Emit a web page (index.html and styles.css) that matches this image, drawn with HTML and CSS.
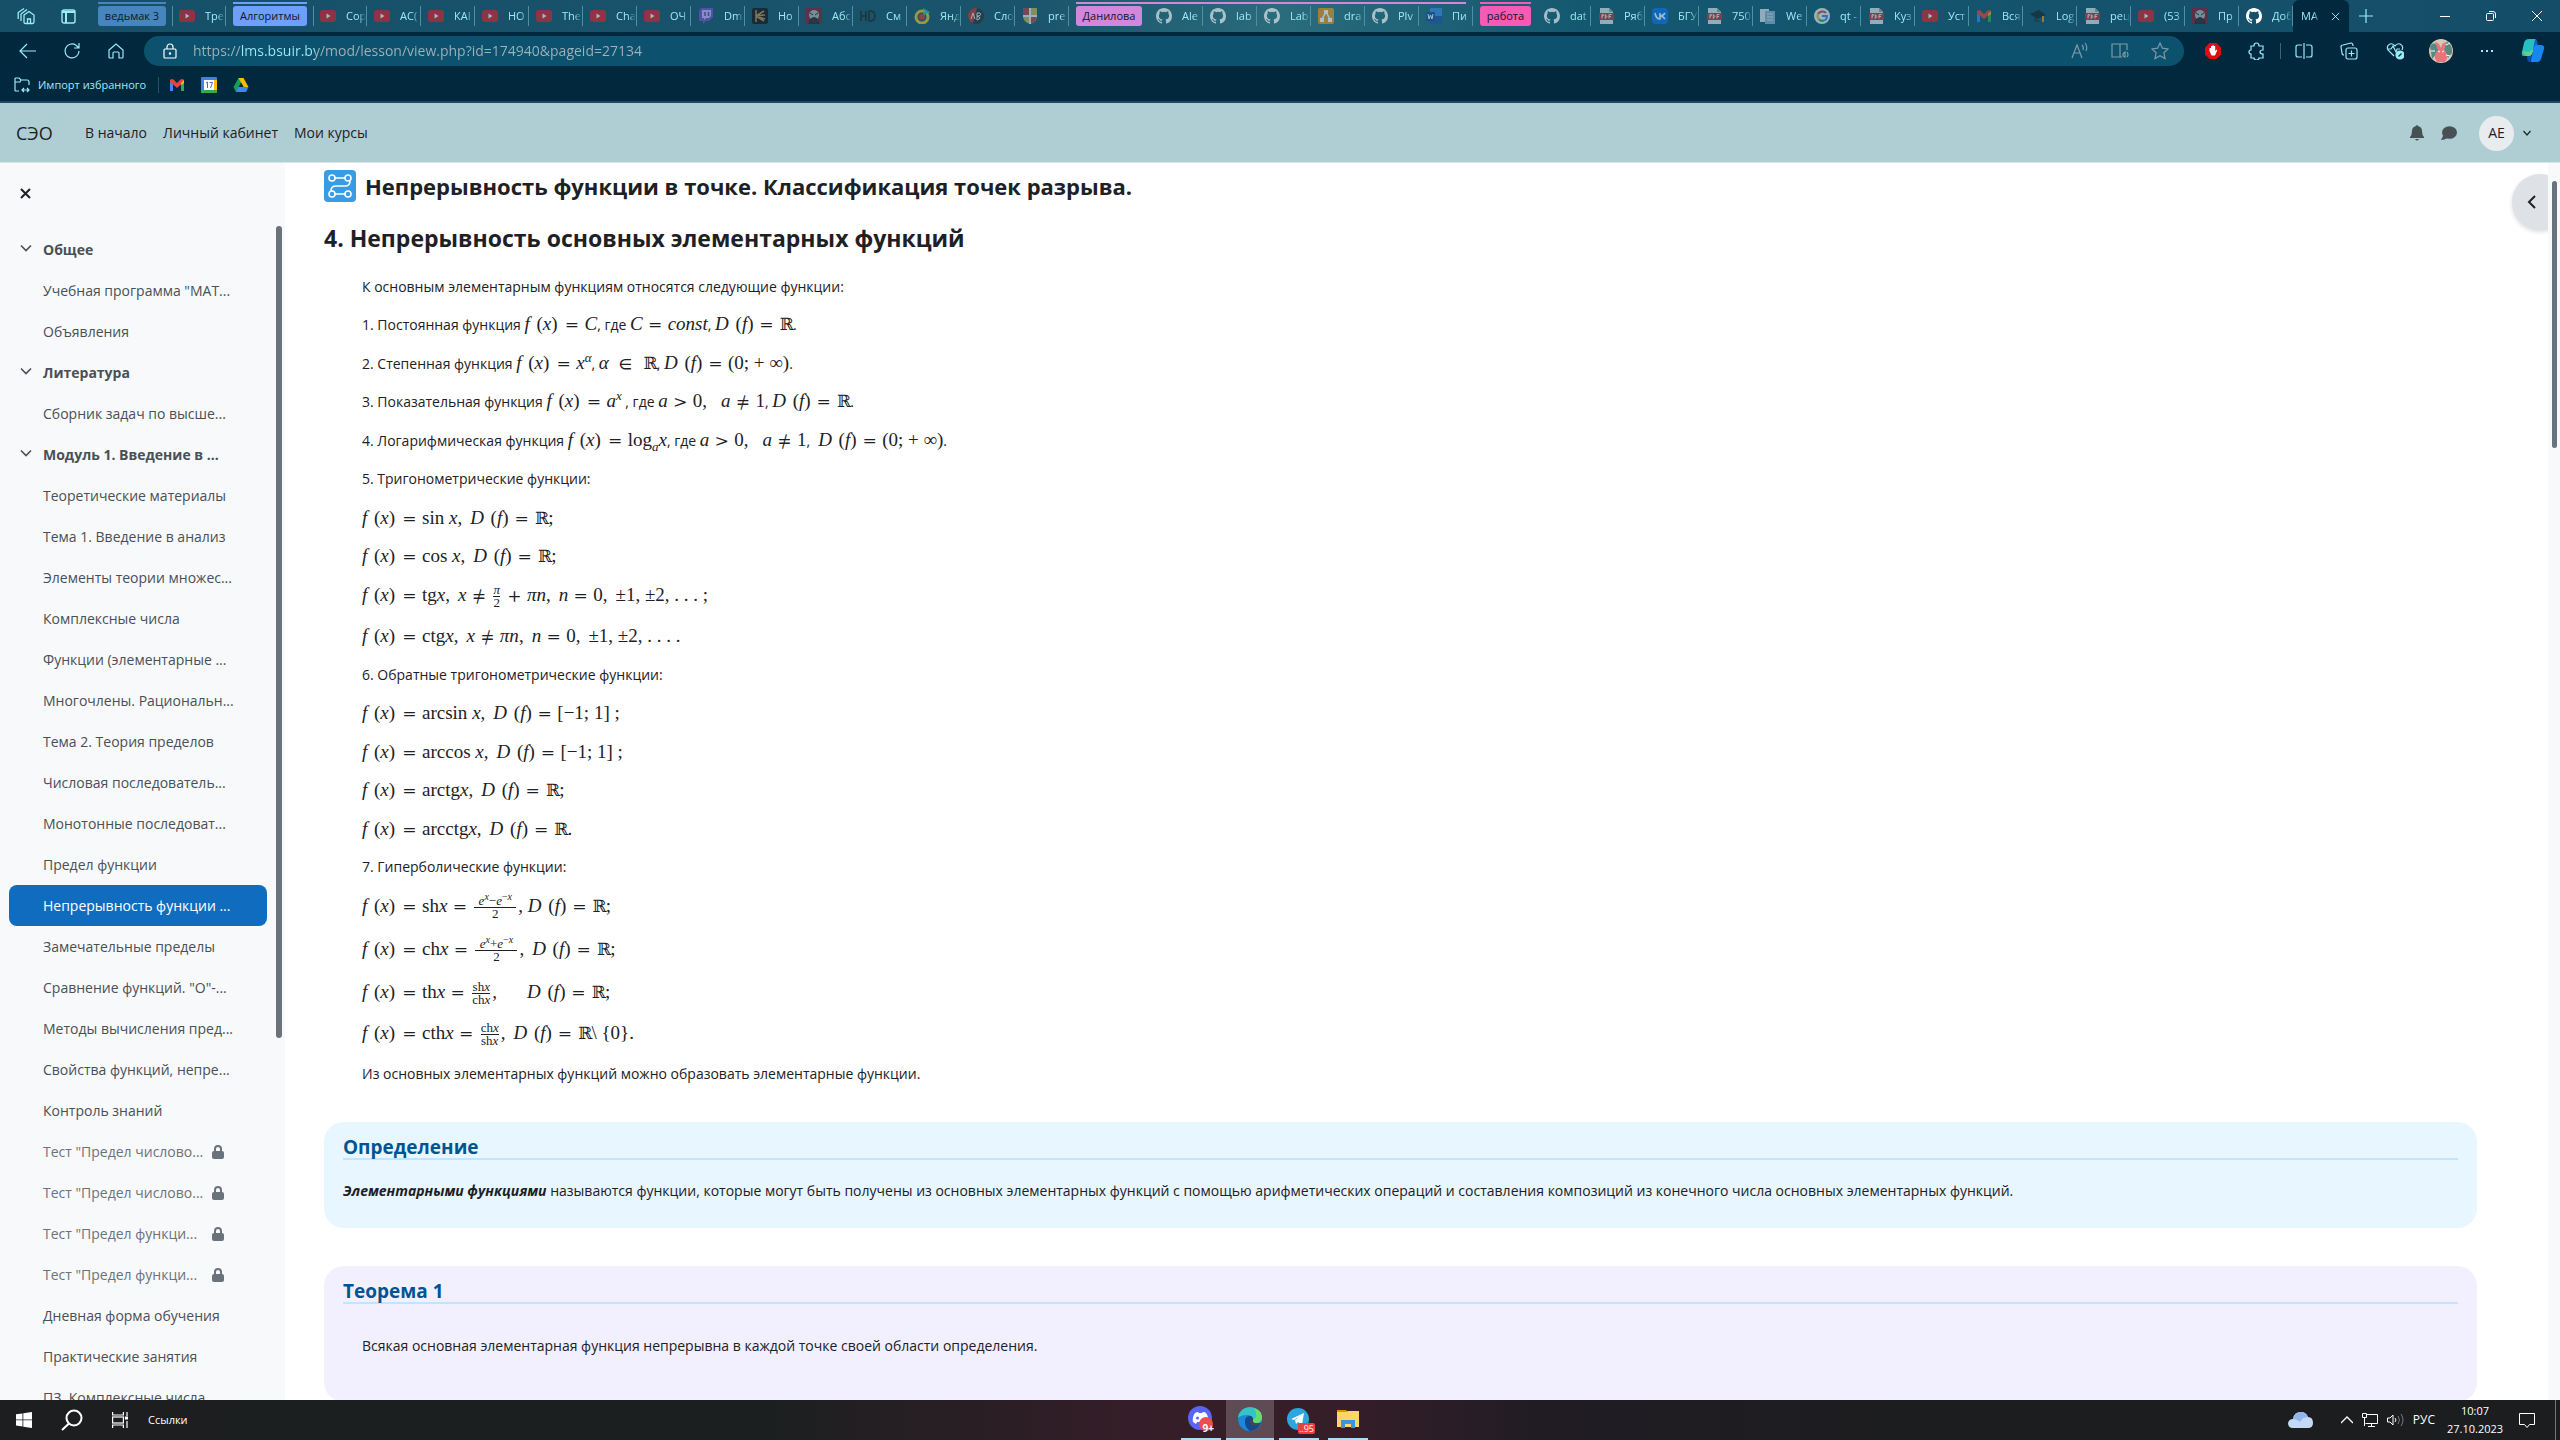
FILE: index.html
```html
<!DOCTYPE html>
<html lang="ru">
<head>
<meta charset="utf-8">
<title>МАТЕМАТИЧЕСКИЙ АНАЛИЗ</title>
<link rel="stylesheet" href="styles.css">
</head>
<body>
<svg class="sprite" aria-hidden="true">
  <symbol id="yt" viewBox="0 0 16 16"><rect y="2" width="16" height="12" rx="3" fill="#e0202c"/><path d="M6.500 5.500v5l4-2.500z" fill="#fff"/></symbol>
  <symbol id="gh" viewBox="0 0 16 16"><path fill="#fff" fill-rule="evenodd" d="M8 0C3.580 0 0 3.580 0 8c0 3.540 2.290 6.530 5.470 7.590.4.070.55-.17.55-.38 0-.19-.01-.82-.01-1.490-2.010.37-2.530-.49-2.690-.94-.09-.23-.48-.94-.82-1.130-.28-.15-.68-.52-.01-.53.63-.01 1.080.58 1.230.82.72 1.210 1.870.87 2.330.66.070-.52.28-.87.51-1.070-1.780-.2-3.640-.89-3.640-3.950 0-.87.31-1.590.82-2.150-.08-.2-.36-1.020.08-2.120 0 0 .67-.21 2.200.82a7.600 7.600 0 0 1 4 0c1.530-1.040 2.200-.82 2.200-.82.44 1.100.16 1.920.08 2.120.51.56.82 1.270.82 2.150 0 3.070-1.870 3.750-3.650 3.950.29.25.54.73.54 1.480 0 1.070-.01 1.930-.01 2.200 0 .21.15.46.55.38A8 8 0 0 0 16 8c0-4.420-3.580-8-8-8z"/></symbol>
  <symbol id="pdf" viewBox="0 0 16 16"><path d="M2 0h9l4 4v12H2z" fill="#e4e9ed"/><path d="M11 0v4h4" fill="#9aa"/><rect x="1" y="5" width="15" height="7" rx="1" fill="#c8303a"/><path d="M4 10.500v-4h1.200q1.200 1-1.200 2M7.300 6.500v4q3-2 0-4M11 10.500v-4h2.500M11 8.500h2" fill="none" stroke="#fff" stroke-width=".9"/></symbol>
  <symbol id="twitch" viewBox="0 0 16 16"><path d="M1 3l2-3h12v9l-4 4H8l-3 3v-3H1z" fill="#7b4fd8"/><path d="M4 2h9v6l-2 2H8l-2 2v-2H4z" fill="#cbb8f5"/><path d="M7 4v4M10.500 4v4" stroke="#6441a5" stroke-width="1.500"/></symbol>
  <symbol id="spark" viewBox="0 0 16 16"><rect width="16" height="16" rx="2" fill="#151515"/><path d="M4 2v12M4 8l8-5M4 8l9-1M4 8l8 5M4 8l9 3" stroke="#c88a48" stroke-width="1.500"/></symbol>
  <symbol id="face" viewBox="0 0 16 16"><rect width="16" height="16" fill="#8c1c30"/><circle cx="8" cy="7" r="5" fill="#b3b7ba"/><path d="M4 5l3 2M12 5L9 7M4 12q4-5 8 0l1 4H3z" stroke="#222" fill="#39262d"/></symbol>
  <symbol id="hd" viewBox="0 0 16 16"><path d="M1 3v10M6 3v10M1 8h5M9 3v10h2q4-1 4-5t-4-5z" fill="none" stroke="#222a2e" stroke-width="2"/></symbol>
  <symbol id="music" viewBox="0 0 16 16"><circle cx="8" cy="9" r="6" fill="none" stroke="#e7c72e" stroke-width="3"/><path d="M9 1l5 3-4 1v5" fill="none" stroke="#3b9" stroke-width="2"/><circle cx="8" cy="9" r="3" fill="#d33b3b"/></symbol>
  <symbol id="dict" viewBox="0 0 16 16"><circle cx="8" cy="8" r="8" fill="#2c3034"/><path d="M0 8a8 8 0 0 1 9-8L5 15A8 8 0 0 1 0 8" fill="#c6372f"/><path d="M3 11l2-6 2 6M9 12V5h3q2 3-3 3 6 2 0 4" stroke="#eee" fill="none"/></symbol>
  <symbol id="shield" viewBox="0 0 16 16"><path d="M1 0h14v8q0 6-7 8-7-2-7-8z" fill="#c7b25a"/><path d="M1 0h7v8H1zM8 8h7q0 5-7 8z" fill="#b54046"/><path d="M8 0v16M1 8h14" stroke="#eee" stroke-width="2"/></symbol>
  <symbol id="draw" viewBox="0 0 16 16"><rect width="16" height="16" rx="2" fill="#e8921c"/><path d="M8 4L4 11M8 4l4 7" stroke="#fff" stroke-width="1.500"/><path d="M6 2h4v4H6zM2 10h4v4H2zM10 10h4v4h-4z" fill="#fff"/></symbol>
  <symbol id="word" viewBox="0 0 16 16"><rect x="4" width="12" height="16" rx="1" fill="#3a86e0"/><path d="M4 8h12v8H4z" fill="#1b52a5"/><rect y="4" width="9" height="9" rx="1" fill="#15479a"/><path d="M2 6l1 5 1.500-4L6 11l1-5" stroke="#fff" fill="none"/></symbol>
  <symbol id="vk" viewBox="0 0 16 16"><rect width="16" height="16" rx="4" fill="#0a74ee"/><path d="M3 5q1 6 5 6V5M13 5q-2 3-5 3 3 0 5 3" fill="none" stroke="#fff" stroke-width="1.600"/></symbol>
  <symbol id="doc" viewBox="0 0 16 16"><path d="M0 1h9v13H0z" fill="#e0e8ef"/><path d="M5 3h10v13H5z" fill="#8fb2d2"/><path d="M7 6h6M7 9h6M7 12h6" stroke="#dce8f2"/></symbol>
  <symbol id="google" viewBox="0 0 16 16"><circle cx="8" cy="8" r="8" fill="#eef"/><path d="M12 5a5 5 0 0 0-8 1" stroke="#e34133" stroke-width="2" fill="none"/><path d="M4 6a5 5 0 0 0 1 5.500" stroke="#f7b90a" stroke-width="2" fill="none"/><path d="M5 11.500a5 5 0 0 0 6 .5" stroke="#33a552" stroke-width="2" fill="none"/><path d="M11 12q2-1 2-4H8" stroke="#4080ee" stroke-width="2" fill="none"/></symbol>
  <symbol id="gmail" viewBox="0 0 16 16"><path d="M1 14V4l3 2v8z" fill="#4285f4"/><path d="M12 14V6l3-2v10z" fill="#34a853"/><path d="M1 5V3q2-2 4 0l3 3 3-3q2-2 4 0v2L8 11z" fill="#ea4335"/><path d="M12 6l3-3v3l-3 2z" fill="#fbbc04"/></symbol>
  <symbol id="cap" viewBox="0 0 16 16"><path d="M0 6l9-4 7 5-9 4z" fill="#17262e"/><path d="M13 8v6" stroke="#d59b36" stroke-width="2"/><path d="M4 10v3q4 2 6 0" fill="#26353d"/></symbol>
  <symbol id="lock" viewBox="0 0 12 14"><path d="M3 7V4a3 3 0 0 1 6 0v3" fill="none" stroke="#6a737b" stroke-width="2"/><rect x="0" y="6" width="12" height="8" rx="2" fill="#6a737b"/></symbol>
  <symbol id="chev" viewBox="0 0 12 12"><path d="M1 3.500l5 5 5-5" fill="none" stroke="#495057" stroke-width="1.600"/></symbol>
</svg>

<header class="browser">
  <nav class="tabs" aria-label="Вкладки">
    <button class="tbtn first" aria-label="Рабочие области"><svg width="18" height="18" viewBox="0 0 18 18" fill="none" stroke="currentColor" stroke-width="1.300"><path d="M7 8l5-3.500L17 8v7q0 1.500-1.500 1.500h-7Q7 16.500 7 15zM10.500 16v-4h3v4M4 14V7l6-4.500M1.200 12V5.500L7 1.500"/></svg></button>
    <button class="tbtn second" aria-label="Вертикальные вкладки"><svg width="15" height="15" viewBox="0 0 15 15" fill="none" stroke="currentColor" stroke-width="1.400"><rect x="1" y="1" width="13" height="13" rx="2"/><path d="M1 3h13M5 4v10" stroke-width="2"/></svg></button>
    <button class="group g-blue">ведьмак 3</button>
    <a class="tab line" href="#"><svg><use href="#yt"/></svg><span>Тре</span></a>
    <button class="group g-light">Алгоритмы</button>
    <a class="tab line" href="#"><svg><use href="#yt"/></svg><span>Сор</span></a>
    <a class="tab" href="#"><svg><use href="#yt"/></svg><span>АС(</span></a>
    <a class="tab" href="#"><svg><use href="#yt"/></svg><span>КАІ</span></a>
    <a class="tab" href="#"><svg><use href="#yt"/></svg><span>НО</span></a>
    <a class="tab" href="#"><svg><use href="#yt"/></svg><span>The</span></a>
    <a class="tab" href="#"><svg><use href="#yt"/></svg><span>Cha</span></a>
    <a class="tab" href="#"><svg><use href="#yt"/></svg><span>ОЧ</span></a>
    <a class="tab" href="#"><svg><use href="#twitch"/></svg><span>Dm</span></a>
    <a class="tab" href="#"><svg><use href="#spark"/></svg><span>Но</span></a>
    <a class="tab" href="#"><svg><use href="#face"/></svg><span>Абс</span></a>
    <a class="tab" href="#"><svg><use href="#hd"/></svg><span>См</span></a>
    <a class="tab" href="#"><svg><use href="#music"/></svg><span>Янд</span></a>
    <a class="tab" href="#"><svg><use href="#dict"/></svg><span>Сло</span></a>
    <a class="tab" href="#"><svg><use href="#shield"/></svg><span>pre</span></a>
    <button class="group g-violet">Данилова</button>
    <a class="tab in-violet" href="#"><svg><use href="#gh"/></svg><span>Ale</span></a>
    <a class="tab in-violet" href="#"><svg><use href="#gh"/></svg><span>lab</span></a>
    <a class="tab in-violet" href="#"><svg><use href="#gh"/></svg><span>Lab</span></a>
    <a class="tab in-violet" href="#"><svg><use href="#draw"/></svg><span>dra</span></a>
    <a class="tab in-violet" href="#"><svg><use href="#gh"/></svg><span>Plv</span></a>
    <a class="tab in-violet last" href="#"><svg><use href="#word"/></svg><span>Пи</span></a>
    <button class="group g-pink">работа</button>
    <a class="tab" href="#"><svg><use href="#gh"/></svg><span>dat</span></a>
    <a class="tab" href="#"><svg><use href="#pdf"/></svg><span>Ряб</span></a>
    <a class="tab" href="#"><svg><use href="#vk"/></svg><span>БГУ</span></a>
    <a class="tab" href="#"><svg><use href="#pdf"/></svg><span>750</span></a>
    <a class="tab" href="#"><svg><use href="#doc"/></svg><span>We</span></a>
    <a class="tab" href="#"><svg><use href="#google"/></svg><span>qt -</span></a>
    <a class="tab" href="#"><svg><use href="#pdf"/></svg><span>Куз</span></a>
    <a class="tab" href="#"><svg><use href="#yt"/></svg><span>Уст</span></a>
    <a class="tab" href="#"><svg><use href="#gmail"/></svg><span>Вся</span></a>
    <a class="tab" href="#"><svg><use href="#cap"/></svg><span>Log</span></a>
    <a class="tab" href="#"><svg><use href="#pdf"/></svg><span>рец</span></a>
    <a class="tab" href="#"><svg><use href="#yt"/></svg><span>(53</span></a>
    <a class="tab" href="#"><svg><use href="#face"/></svg><span>Пр</span></a>
    <a class="tab bright" href="#"><svg><use href="#gh"/></svg><span>Доб</span></a>
    <a class="tab active" href="#"><span>МА</span><svg class="x" viewBox="0 0 10 10"><path d="M1 1l8 8M9 1L1 9" stroke="#9ff" fill="none"/></svg></a>
    <button class="tbtn plus" aria-label="Новая вкладка"><svg width="14" height="14" viewBox="0 0 14 14"><path d="M7 0v14M0 7h14" stroke="currentColor" stroke-width="1.200"/></svg></button>
    <div class="winctl">
      <button aria-label="Свернуть"><svg width="10" height="10" viewBox="0 0 10 10"><path d="M0 5.500h10" stroke="#fff"/></svg></button>
      <button aria-label="Восстановить"><svg width="10" height="10" viewBox="0 0 10 10" fill="none" stroke="#fff"><rect x=".5" y="2.500" width="7" height="7" rx="1"/><path d="M3 .5h4q2.500 0 2.500 2.500v4"/></svg></button>
      <button aria-label="Закрыть"><svg width="10" height="10" viewBox="0 0 10 10"><path d="M0 0l10 10M10 0L0 10" stroke="#fff"/></svg></button>
    </div>
  </nav>

  <div class="toolbar">
    <button class="nav" aria-label="Назад"><svg viewBox="0 0 18 18"><path d="M17 9H1M8 2L1 9l7 7"/></svg></button>
    <button class="nav" aria-label="Обновить"><svg viewBox="0 0 18 18"><path d="M16 9A7 7 0 1 1 13 3.200L16 6M16 1v5h-5"/></svg></button>
    <button class="nav" aria-label="Домой"><svg viewBox="0 0 18 18"><path d="M2 8l7-6 7 6v7q0 1-1 1h-3v-5q0-1-1-1H7q-1 0-1 1v5H3q-1 0-1-1z"/></svg></button>
    <div class="address">
      <svg class="padlock" viewBox="0 0 14 16"><path d="M4 6V4a3 3 0 0 1 6 0v2"/><rect x="1" y="6" width="12" height="9" rx="1"/><circle cx="7" cy="10.500" r=".6"/></svg>
      <input type="text" aria-label="Адрес" value="https://lms.bsuir.by/mod/lesson/view.php?id=174940&amp;pageid=27134">
      <button class="ai" aria-label="Прочесть вслух"><svg viewBox="0 0 18 18"><path d="M1 16L6 3l5 13M3 11h6M11 3q2 2 1 5M14 1q3 4 1 8"/></svg></button>
      <button class="ai" aria-label="Иммерсивное чтение"><svg viewBox="0 0 18 18"><path d="M9 15V2M9 15H1V2h15v6M9 15h2M12 12l2-2v5l-2-1zM16 10q2 3 0 5"/></svg></button>
      <button class="ai" aria-label="В избранное"><svg viewBox="0 0 18 18"><path d="M9 1l2.400 5.200 5.600.7-4.100 3.900 1.100 5.700L9 13.700 4 16.500l1.100-5.700L1 6.900l5.600-.7z"/></svg></button>
    </div>
    <div class="ext">
      <button aria-label="Блокировщик"><svg viewBox="0 0 18 18"><path d="M5.500 1h7L17 5.500v7L12.500 17h-7L1 12.500v-7z" fill="#e30b13" stroke="none"/><path d="M5.500 9V6h1.500V4h1.400V3.200h1.400V4h1.400v5l1.500-1.500q.8.5.2 1.500L11 13.500H7.500z" fill="#fff" stroke="none"/></svg></button>
      <button aria-label="Расширения"><svg viewBox="0 0 18 18"><path d="M6 4q0-3 2.500-3T11 4h4v4q-3 0-3 2t3 2v4h-4q0 2-2.500 2T6 16H3v-4q-2 0-2-2t2-2V4z"/></svg></button>
      <i class="bar"></i>
      <button aria-label="Разделить экран"><svg viewBox="0 0 18 18"><path d="M9 1v16M7 3H3Q1 3 1 5v8q0 2 2 2h4M11 3h4q2 0 2 2v8q0 2-2 2h-4"/></svg></button>
      <button aria-label="Коллекции"><svg viewBox="0 0 18 18"><rect x="6" y="6" width="11" height="11" rx="2"/><path d="M11.500 8.500v6M8.500 11.500h6M4 13Q2 13 2 11L1 5q0-2 2-2l8-2q2 0 2 3"/></svg></button>
      <button aria-label="Производительность"><svg viewBox="0 0 18 18"><path d="M8 14L2 8Q0 4 4 2q3-1 5 2 2-3 5-2 4 2 2 6M1 7h4l2-3 3 6 1-3h3"/><circle cx="14" cy="13" r="4" fill="#9cecf5"/><path d="M12.500 14.500l3-3" stroke="#02283e"/></svg></button>
      <button aria-label="Профиль"><svg class="big" viewBox="0 0 24 24"><circle cx="12" cy="12" r="12" fill="#d9c8b9" stroke="none"/><path d="M1 7q5-7 10 4L3 20zM18 2q6 5 5 12l-4 5-4-9z" fill="#528c80" stroke="none"/><path d="M8 23q-5-6 1-12L6 3q4 0 6 6 1-6 5-6l-2 8q6 5 1 12z" fill="#e8757b" stroke="none"/><path d="M9 12l2 1M15 12l-2 1M2 12h4M17 16l4 1M17 6l4-2" stroke="#fff"/></svg></button>
      <button aria-label="Меню"><svg viewBox="0 0 18 18"><path d="M3 9h2M8 9h2M13 9h2" stroke-width="2"/></svg></button>
      <button aria-label="Copilot"><svg class="big" viewBox="0 0 24 24"><g stroke="none"><path d="M3 4q1-4 5-4h6q2 0 1 3l-4 12q-1 2-3 2H3q-3 0-2-4z" fill="#28bfc0"/><path d="M1 12l4 5h3q2 0 3-2l2-5-5 3z" fill="#65cf83"/><path d="M14 6h6q4 0 3 4l-3 10q-1 3-4 3h-5q-2 0-1-3l3-12q0-2 1-2z" fill="#1787ef"/><path d="M6 17h5l2-5-4 9q1 3 4 2H9q-3 0-3-6z" fill="#0f4dbd"/><path d="M14 0q2 0 3 6h-3l-2 5z" fill="#145cc9"/></g></svg></button>
    </div>
  </div>

  <div class="bookmarks">
    <a href="#"><svg width="16" height="16" viewBox="0 0 16 16" fill="none" stroke="currentColor" stroke-width="1.200"><path d="M5 14H2q-1 0-1-1V2q0-1 1-1h3l2 2h6q2 0 2 2v3M1 5h5l1-2M8 13h7M13 11l2 2-2 2M10 11l-2 2 2 2"/></svg>Импорт избранного</a>
    <i class="bar"></i>
    <a href="#" aria-label="Gmail"><svg width="16" height="16"><use href="#gmail"/></svg></a>
    <a href="#" aria-label="Календарь"><svg width="16" height="16" viewBox="0 0 16 16"><rect width="16" height="16" rx="1" fill="#3f7ff2"/><path d="M13 3h3v10h-3z" fill="#fbbc04"/><path d="M0 13h16v3H0z" fill="#34a853"/><path d="M3 3h10v10H3z" fill="#fff"/><path d="M5 6l1.500-1v6M8.500 5.500h3l-2 5.500" stroke="#3f6fd8" fill="none"/></svg></a>
    <a href="#" aria-label="Диск"><svg width="16" height="16" viewBox="0 0 16 16"><path d="M5.500 1h5L5 15H3L.5 10z" fill="#0fa15b"/><path d="M5.500 1h5l5 9h-5z" fill="#fbbc04"/><path d="M3 15l2.500-5h10L13 15z" fill="#4285f4"/><path d="M8 5.500l2.500 4.500h-5z" fill="#02283e"/></svg></a>
  </div>
</header>

<header class="site">
  <a class="brand" href="#">СЭО</a>
  <nav><a href="#">В начало</a><a href="#">Личный кабинет</a><a href="#">Мои курсы</a></nav>
  <div class="user">
    <button aria-label="Уведомления"><svg width="14" height="16" viewBox="0 0 14 16" fill="#475154"><path d="M6 1q1-2 2 0 4 1 4 5 0 4 2 6v1H0v-1q2-2 2-6 0-4 4-5zM5 14h4q-2 3-4 0z"/></svg></button>
    <button aria-label="Сообщения"><svg width="16" height="14" viewBox="0 0 16 14" fill="#475154"><ellipse cx="8.500" cy="6.500" rx="7.500" ry="6.300"/><path d="M3 8l-3 6q4 0 6-2z"/></svg></button>
    <button class="avatar">АЕ</button>
    <button class="small" aria-label="Меню пользователя"><svg width="8" height="8" viewBox="0 0 8 8"><path d="M.5 2L4 6l3.500-4" fill="none" stroke="#222b2e" stroke-width="1.300"/></svg></button>
  </div>
</header>

<div class="app">
  <aside class="drawer">
    <button class="close" aria-label="Закрыть"><svg width="11" height="11" viewBox="0 0 11 11"><path d="M1 1l9 9M10 1l-9 9" stroke="#1d2125" stroke-width="2"/></svg></button>
    <ul class="index">
      <li class="sec"><svg><use href="#chev"/></svg><a href="#">Общее</a></li>
      <li><a href="#">Учебная программа "МАТ...</a></li>
      <li><a href="#">Объявления</a></li>
      <li class="sec"><svg><use href="#chev"/></svg><a href="#">Литература</a></li>
      <li><a href="#">Сборник задач по высше...</a></li>
      <li class="sec"><svg><use href="#chev"/></svg><a href="#">Модуль 1. Введение в ...</a></li>
      <li><a href="#">Теоретические материалы</a></li>
      <li><a href="#">Тема 1. Введение в анализ</a></li>
      <li><a href="#">Элементы теории множес...</a></li>
      <li><a href="#">Комплексные числа</a></li>
      <li><a href="#">Функции (элементарные ...</a></li>
      <li><a href="#">Многочлены. Рациональн...</a></li>
      <li><a href="#">Тема 2. Теория пределов</a></li>
      <li><a href="#">Числовая последователь...</a></li>
      <li><a href="#">Монотонные последоват...</a></li>
      <li><a href="#">Предел функции</a></li>
      <li class="current"><a href="#">Непрерывность функции ...</a></li>
      <li><a href="#">Замечательные пределы</a></li>
      <li><a href="#">Сравнение функций. "О"-...</a></li>
      <li><a href="#">Методы вычисления пред...</a></li>
      <li><a href="#">Свойства функций, непре...</a></li>
      <li><a href="#">Контроль знаний</a></li>
      <li class="dim"><a href="#">Тест "Предел числово...</a><svg><use href="#lock"/></svg></li>
      <li class="dim"><a href="#">Тест "Предел числово...</a><svg><use href="#lock"/></svg></li>
      <li class="dim"><a href="#">Тест "Предел функци...</a><svg><use href="#lock"/></svg></li>
      <li class="dim"><a href="#">Тест "Предел функци...</a><svg><use href="#lock"/></svg></li>
      <li><a href="#">Дневная форма обучения</a></li>
      <li><a href="#">Практические занятия</a></li>
      <li><a href="#">ПЗ. Комплексные числа</a></li>
    </ul>
    <i class="thumb"></i>
  </aside>

  <main>
    <div class="title">
      <svg width="32" height="32" viewBox="0 0 32 32" fill="none" stroke="#fff" stroke-width="1.600"><rect width="32" height="32" rx="4" fill="#399be2" stroke="none"/><circle cx="8" cy="8" r="3"/><circle cx="24" cy="8" r="3"/><circle cx="8" cy="24" r="3"/><circle cx="24" cy="24" r="3"/><path d="M11 8h10M11 24h10M26 11q0 5-5 5H12q-5 0-5 5"/></svg>
      <h1>Непрерывность функции в точке. Классификация точек разрыва.</h1>
    </div>
    <h2>4. Непрерывность основных элементарных функций</h2>
    <div class="lesson">
      <p>К основным элементарным функциям относятся следующие функции:</p>
      <p>1. Постоянная функция <span class="m"><span class="f"><i>f</i> (<i>x</i>)</span><span class="r">=</span><i>C</i></span>, где <span class="m"><i>C</i><span class="r">=</span><i>const</i></span>, <span class="m"><span class="d"><i>D</i> (<i>f</i>)</span><span class="r">=</span><span class="bb">ℝ</span></span>.</p>
      <p>2. Степенная функция <span class="m"><span class="f"><i>f</i> (<i>x</i>)</span><span class="r">=</span><i>x</i><sup><i>α</i></sup></span>, <span class="m"><i>α</i><span class="r in">∈</span><span class="bb">ℝ</span></span>, <span class="m"><span class="d"><i>D</i> (<i>f</i>)</span><span class="r">=</span>(0; + ∞)</span>.</p>
      <p>3. Показательная функция <span class="m"><span class="f"><i>f</i> (<i>x</i>)</span><span class="r">=</span><i>a</i><sup><i>x</i></sup></span> , где <span class="m"><i>a</i><span class="r">&gt;</span>0,<span class="q"></span><i>a</i><span class="r">≠</span>1</span>, <span class="m"><span class="d"><i>D</i> (<i>f</i>)</span><span class="r">=</span><span class="bb">ℝ</span></span>.</p>
      <p>4. Логарифмическая функция <span class="m"><span class="f"><i>f</i> (<i>x</i>)</span><span class="r">=</span>log<sub><i>a</i></sub><i>x</i></span>, где <span class="m"><i>a</i><span class="r">&gt;</span>0,<span class="q"></span><i>a</i><span class="r">≠</span>1</span>,<span class="m"><span class="s"></span><span class="d"><i>D</i> (<i>f</i>)</span><span class="r">=</span>(0; + ∞)</span>.</p>
      <p>5. Тригонометрические функции:</p>
      <p class="m"><span class="f"><i>f</i> (<i>x</i>)</span><span class="r">=</span>sin <i>x</i>,<span class="s"></span><span class="d"><i>D</i> (<i>f</i>)</span><span class="r">=</span><span class="bb">ℝ</span>;</p>
      <p class="m"><span class="f"><i>f</i> (<i>x</i>)</span><span class="r">=</span>cos <i>x</i>,<span class="s"></span><span class="d"><i>D</i> (<i>f</i>)</span><span class="r">=</span><span class="bb">ℝ</span>;</p>
      <p class="m tall"><span class="f"><i>f</i> (<i>x</i>)</span><span class="r">=</span>tg<i>x</i>,<span class="s"></span><i>x</i><span class="r">≠</span><span class="frac"><span><i>π</i></span><span>2</span></span><span class="r">+</span><i>πn</i>,<span class="s"></span><i>n</i><span class="r">=</span>0,<span class="s"></span>±1, ±2, . . . ;</p>
      <p class="m"><span class="f"><i>f</i> (<i>x</i>)</span><span class="r">=</span>ctg<i>x</i>,<span class="s"></span><i>x</i><span class="r">≠</span><i>πn</i>,<span class="s"></span><i>n</i><span class="r">=</span>0,<span class="s"></span>±1, ±2, . . . .</p>
      <p>6. Обратные тригонометрические функции:</p>
      <p class="m"><span class="f"><i>f</i> (<i>x</i>)</span><span class="r">=</span>arcsin <i>x</i>,<span class="s"></span><span class="d"><i>D</i> (<i>f</i>)</span><span class="r">=</span>[−1; 1] ;</p>
      <p class="m"><span class="f"><i>f</i> (<i>x</i>)</span><span class="r">=</span>arccos <i>x</i>,<span class="s"></span><span class="d"><i>D</i> (<i>f</i>)</span><span class="r">=</span>[−1; 1] ;</p>
      <p class="m"><span class="f"><i>f</i> (<i>x</i>)</span><span class="r">=</span>arctg<i>x</i>,<span class="s"></span><span class="d"><i>D</i> (<i>f</i>)</span><span class="r">=</span><span class="bb">ℝ</span>;</p>
      <p class="m"><span class="f"><i>f</i> (<i>x</i>)</span><span class="r">=</span>arcctg<i>x</i>,<span class="s"></span><span class="d"><i>D</i> (<i>f</i>)</span><span class="r">=</span><span class="bb">ℝ</span>.</p>
      <p>7. Гиперболические функции:</p>
      <p class="m taller"><span class="f"><i>f</i> (<i>x</i>)</span><span class="r">=</span>sh<i>x</i><span class="r">=</span><span class="frac wide"><span><i>e</i><sup><i>x</i></sup>−<i>e</i><sup>−<i>x</i></sup></span><span>2</span></span>, <span class="d"><i>D</i> (<i>f</i>)</span><span class="r">=</span><span class="bb">ℝ</span>;</p>
      <p class="m taller"><span class="f"><i>f</i> (<i>x</i>)</span><span class="r">=</span>ch<i>x</i><span class="r">=</span><span class="frac wide"><span><i>e</i><sup><i>x</i></sup>+<i>e</i><sup>−<i>x</i></sup></span><span>2</span></span>,<span class="s"></span><span class="d"><i>D</i> (<i>f</i>)</span><span class="r">=</span><span class="bb">ℝ</span>;</p>
      <p class="m tall"><span class="f"><i>f</i> (<i>x</i>)</span><span class="r">=</span>th<i>x</i><span class="r">=</span><span class="frac"><span>sh<i>x</i></span><span>ch<i>x</i></span></span>,<span class="s"></span><span class="q"></span><span class="s"></span><span class="d"><i>D</i> (<i>f</i>)</span><span class="r">=</span><span class="bb">ℝ</span>;</p>
      <p class="m tall"><span class="f"><i>f</i> (<i>x</i>)</span><span class="r">=</span>cth<i>x</i><span class="r">=</span><span class="frac"><span>ch<i>x</i></span><span>sh<i>x</i></span></span>,<span class="s"></span><span class="d"><i>D</i> (<i>f</i>)</span><span class="r">=</span><span class="bb">ℝ</span>\ {0}.</p>
      <p>Из основных элементарных функций можно образовать элементарные функции.</p>
    </div>
    <section class="box def">
      <h3>Определение</h3>
      <p><strong><em>Элементарными функциями</em></strong> называются функции, которые могут быть получены из основных элементарных функций с помощью арифметических операций и составления композиций из конечного числа основных элементарных функций.</p>
    </section>
    <section class="box thm">
      <h3>Теорема 1</h3>
      <p>Всякая основная элементарная функция непрерывна в каждой точке своей области определения.</p>
    </section>
    <button class="opener" aria-label="Открыть блоки"><svg width="9" height="14" viewBox="0 0 9 14"><path d="M8 1L2 7l6 6" fill="none" stroke="#1d2125" stroke-width="2"/></svg></button>
  </main>
  <div class="scroll"><i></i></div>
</div>

<footer class="taskbar">
  <div class="left">
    <button aria-label="Пуск"><svg width="16" height="16" viewBox="0 0 16 16" fill="#fff"><path d="M0 2.300L6.500 1.400v6.100H0zM7.300 1.300L16 0v7.500H7.300zM0 8.300h6.500v6.200L0 13.600zM7.300 8.300H16V16l-8.700-1.300z"/></svg></button>
    <button aria-label="Поиск"><svg width="22" height="22" viewBox="0 0 22 22" fill="none" stroke="#fff" stroke-width="2"><circle cx="13" cy="9" r="7.500"/><path d="M8 14.500L1 21"/></svg></button>
    <button aria-label="Представление задач"><svg width="16" height="16" viewBox="0 0 16 16" fill="none" stroke="#fff" stroke-width="1.200"><path d="M.6 0v3h10.800V0M.6 16v-3h10.800v3M15 0v4M15 9v7"/><rect x=".6" y="5" width="10.800" height="6"/><path d="M13.500 5h3v2h-3z" fill="#fff"/></svg></button>
    <span class="links">Ссылки</span>
  </div>
  <div class="pinned">
    <button class="pin" aria-label="Discord"><svg width="26" height="26" viewBox="0 0 26 26"><circle cx="12" cy="12" r="12" fill="#5865f2"/><path d="M5 16q-1-5 2-9 2-1 3-1l1 1h3l1-1q2 0 3 1 3 4 2 9l-3 2-1-2H9l-1 2z" fill="#fff"/><circle cx="9.500" cy="12" r="1.500" fill="#5865f2"/><circle cx="18" cy="18" r="7" fill="#ed4f51"/></svg><b class="badge">9+</b></button>
    <button class="pin on" aria-label="Edge"><svg width="24" height="24" viewBox="0 0 24 24"><circle cx="12" cy="12" r="12" fill="#1b87d6"/><path d="M0 11Q1 1 12 0q11 1 12 10 0 6-6 6-4 0-3-3 0-5-6-5Q3 8 0 11z" fill="#36c3c4"/><path d="M16 1q8 3 8 9 0 6-6 6-4 0-3-3 6-3 1-12z" fill="#69dc6c"/><path d="M7 13q1-4 5-4 3 0 3 4-1 5 8 3-4 8-11 8-6-4-5-11z" fill="#114a91"/><path d="M15 11q-3 7 8 5l-5 3q-7 0-6-5z" fill="#4c4150"/></svg></button>
    <button class="pin" aria-label="Telegram"><svg width="24" height="24" viewBox="0 0 24 24"><circle cx="11" cy="12" r="11" fill="#2da5de"/><path d="M4 12l13-6-2 12-4-3-2 2-1-4 6-5-7 5z" fill="#fff"/></svg><b class="badge sq">..95</b></button>
    <button class="pin" aria-label="Проводник"><svg width="22" height="20" viewBox="0 0 22 20"><path d="M0 1h9l2 2H0z" fill="#d9950b"/><path d="M0 3h9l2-1h11v16H0z" fill="#fed566"/><path d="M4 19v-8h14v8h-4v-4H8v4z" fill="#3b95d9"/></svg></button>
  </div>
  <div class="tray">
    <svg class="cloud" width="26" height="18" viewBox="0 0 26 18"><path d="M5 17q-5 0-5-5 1-4 5-4 1-7 8-7 5 0 7 5 5 0 5 6 0 5-5 5z" fill="#c4d9f8"/><path d="M5 8q1-7 8-7 5 0 7 5l-5 1-3 4q-3-3-7-3z" fill="#93b5ee"/></svg>
    <svg width="12" height="8" viewBox="0 0 12 8"><path d="M0 7l6-6 6 6" fill="none" stroke="#fff" stroke-width="1.300"/></svg>
    <svg width="16" height="14" viewBox="0 0 16 14" fill="none" stroke="#fff"><path d="M5 1.500h10.500v9H3.500M9.500 10v3M6 13.500h7M.5.500h4v4h-4zM2.500 5v8"/></svg>
    <svg width="17" height="14" viewBox="0 0 17 14" fill="none" stroke="#fff"><path d="M.5 5v4H3l3 3V2L3 5zM8 5q2 2 0 4"/><path d="M11 3q3 4 0 8M14 1q4 6 0 12" stroke="#777"/></svg>
    <span class="lang">РУС</span>
    <time>10:07<br>27.10.2023</time>
    <svg class="note" width="16" height="16" viewBox="0 0 16 16" fill="none" stroke="#fff"><path d="M.5 1.500h15v11h-5l-2.500 3-2.500-3h-5z"/></svg>
  </div>
</footer>
</body>
</html>
```

FILE: styles.css
```css
* { box-sizing: border-box; }
html, body { height: 100%; margin: 0; }
body {
  display: flex;
  flex-direction: column;
  overflow: hidden;
  background: #fff;
  color: #1d2125;
  font: 14px/22px "Open Sans", "Noto Sans", sans-serif;
}
a { color: inherit; text-decoration: none; }
button { padding: 0; border: 0; background: none; color: inherit; font: inherit; }
ul { margin: 0; padding: 0; list-style: none; }
svg { display: block; flex: none; }
.sprite { position: absolute; width: 0; height: 0; }

/* browser chrome */
.browser { flex: none; height: 103px; background: #02283e; border-bottom: 2px solid #1c4a66; color: #9cecf5; }
.tabs {
  display: flex;
  height: 32px;
  background: linear-gradient(90deg, #155068, #1a546c 40%, #2a6b7c 50%, #145870 62%, #154d68);
  font-size: 11px;
}
.tbtn { display: grid; place-items: center; flex: none; }
.first { width: 52px; }
.second { width: 32px; margin-right: 14px; }
.plus { width: 34px; }
.group {
  position: relative;
  flex: none;
  height: 20px;
  margin: 6px 6px 0 7px;
  border-radius: 3px;
  color: #111820;
  font-size: 11px;
  line-height: 20px;
}
.group::before { content: ""; position: absolute; left: 0; right: 0; top: -4px; height: 2px; background: inherit; }
.g-blue { width: 68px; margin-left: 0; background: #4685bd; }
.g-light { width: 74px; background: #6d9ffc; }
.g-violet { width: 66px; margin-right: 7px; background: #d188dc; }
.g-pink { width: 51px; background: #f45bb6; }
.tab {
  position: relative;
  display: flex;
  align-items: center;
  gap: 10px;
  flex: none;
  width: 54px;
  padding-left: 7px;
}
.tab::after, .tab.line::before { content: ""; position: absolute; right: 0; top: 6px; width: 1px; height: 20px; background: #4c90a6; }
.tab.line::before { left: 0; right: auto; }
.tab.in-violet::before { content: ""; position: absolute; left: -7px; right: 0; top: 2px; height: 2px; background: #d188dc; }
.tab.in-violet.last::before { right: 7px; }
.tab svg { width: 16px; height: 16px; opacity: .6; }
.tab.bright svg { opacity: 1; }
.tab span {
  width: 20px;
  white-space: nowrap;
  -webkit-mask-image: linear-gradient(90deg, #000 60%, transparent);
  mask-image: linear-gradient(90deg, #000 60%, transparent);
}
.tab.active { width: 56px; padding-left: 8px; background: #02283e; border-radius: 6px 6px 0 0; }
.tab.active::after { display: none; }
.tab.active .x { width: 9px; height: 9px; opacity: 1; }
.winctl { display: flex; margin-left: auto; }
.winctl button { display: grid; place-items: center; width: 46px; }

.toolbar { display: flex; align-items: center; height: 38px; padding: 0 4px 0 6px; }
.toolbar svg { width: 18px; height: 18px; fill: none; stroke: currentColor; stroke-width: 1.200; }
.toolbar svg.big { width: 24px; height: 24px; stroke-width: 1; }
.toolbar button { display: grid; place-items: center; flex: none; width: 44px; height: 30px; }
.address {
  display: flex;
  align-items: center;
  flex: 1;
  height: 30px;
  margin-left: 6px;
  padding: 0 4px 0 19px;
  border-radius: 15px;
  background: #0c526e;
  color: #7f9aa5;
}
.address .padlock { width: 14px; height: 16px; margin-right: 16px; stroke: #fff; }
.address input {
  flex: 1;
  min-width: 0;
  padding: 0;
  border: 0;
  outline: 0;
  background: linear-gradient(90deg, #a3b1b8 48px, #9cecf5 48px 122px, #a3b1b8 122px);
  -webkit-background-clip: text;
  background-clip: text;
  color: transparent;
  font: 14px/22px "Open Sans", sans-serif;
}
.toolbar .ai { width: 40px; }
.ext { display: flex; align-items: center; padding-left: 7px; }
.ext .bar { width: 1px; height: 16px; margin: 0 1px; background: #3a6478; }
.ext button:nth-last-child(-n+5) { width: 46px; }

.bookmarks { display: flex; align-items: center; gap: 16px; height: 30px; padding-left: 14px; font-size: 11px; }
.bookmarks a { display: flex; align-items: center; gap: 8px; }
.bookmarks .bar { width: 1px; height: 16px; margin: 0 -6px 0 -4px; background: #2c5062; }

/* site header */
.site {
  display: flex;
  align-items: center;
  flex: none;
  height: 60px;
  padding: 1px 29px 0 16px;
  border-bottom: 1px solid #dee2e6;
  background: #aeced3;
}
.brand { width: 69px; font-size: 18px; }
.site nav { display: flex; gap: 16px; }
.user { display: flex; align-items: center; gap: 17px; margin-left: auto; }
.avatar { width: 35px; height: 35px; margin-left: 5px; border-radius: 50%; background: #e9ecef; }
.small { margin-left: -8px; }

.app { display: flex; flex: 1; min-height: 0; }

/* course index */
.drawer { position: relative; flex: none; width: 285px; overflow: hidden; background: #f8f9fa; color: #495057; }
.close { display: block; margin: 25px 0 30px 20px; }
.index { padding: 0 18px 0 9px; }
.index li { display: flex; align-items: center; height: 41px; padding-left: 34px; border-radius: 8px; white-space: nowrap; }
.index .sec { padding-left: 11px; font-weight: 700; }
.index .sec svg { width: 12px; height: 12px; margin: -4px 11px 0 0; }
.index .dim { color: #6a737b; }
.index .dim a { width: 169px; }
.index .dim svg { width: 12px; height: 14px; }
.index .current { background: #0f6cbf; color: #fff; }
.thumb { position: absolute; right: 3px; top: 63px; width: 6px; height: 812px; border-radius: 3px; background: #6a737b; }

/* lesson */
main { position: relative; flex: 1; min-width: 0; overflow: hidden; padding: 7px 71px 0 39px; }
.title { display: flex; align-items: center; gap: 9px; height: 32px; }
h1, h2 { margin: 0; font-size: 22px; line-height: 32px; }
h2 { margin-top: 20px; font-size: 23px; }
.lesson { padding: 22px 38px 0; }
.lesson p { height: 22px; margin: 0 0 16px; white-space: nowrap; }
.lesson p:nth-child(even) { height: 23px; }
.lesson p.tall { height: 25px; }
.lesson p.taller { height: 27px; }

/* formulas */
.m { font-family: "Liberation Serif", serif; font-size: 19px; white-space: nowrap; }
.lesson span.m { line-height: 20px; }
.m span { display: inline-block; }
.f { width: 35px; }
.d { width: 39px; }
.f i:first-child, .d i:first-child { margin-right: 2px; }
.r { width: 25px; text-align: center; font-family: "DejaVu Math TeX Gyre", "Liberation Serif", serif; font-size: 17px; line-height: 20px; }
.in { width: 34px; }
.q { width: 14px; }
.s { width: 8px; }
.bb { width: 14px; font-family: "DejaVu Math TeX Gyre", "DejaVu Serif", serif; font-size: 17px; line-height: 20px; }
.m sup, .m sub { font-size: 13px; line-height: 0; }
.m .frac { display: inline-flex; flex-direction: column; align-items: center; vertical-align: middle; margin: 0 2px; font-size: 13px; line-height: 12px; }
.m .frac span:last-child { border-top: 1px solid #1d2125; align-self: stretch; text-align: center; }
.m .frac sup { font-size: 10px; }
.m .wide { width: 42px; }

.box { padding: 14px 19px; border-radius: 20px; }
.box h3 { margin: 0; border-bottom: 2px solid #c2e4ff; color: #005590; font-size: 19px; line-height: 22px; }
.box p { margin: 20px 0 0; }
.def { height: 106px; margin-top: 37px; background: #e7f6ff; }
.thm { height: 136px; margin-top: 38px; background: #f2f0ff; }
.thm p { margin: 31px 19px 0; }
.opener {
  position: absolute;
  right: -20px;
  top: 11px;
  width: 56px;
  height: 56px;
  padding-left: 15px;
  border-radius: 50%;
  background: #dee2e6;
  box-shadow: 0 2px 4px rgba(0, 0, 0, .15);
}
.scroll { flex: none; width: 12px; padding: 18px 3px 0 4px; background: #f8f9fa; }
.scroll i { display: block; height: 267px; border-radius: 3px; background: #6a737b; }

/* system taskbar */
.taskbar {
  display: grid;
  grid-template-columns: 1fr auto 1fr;
  flex: none;
  height: 40px;
  background: linear-gradient(90deg, #1c1e20, #1c1f20 30%, #361e29 45%, #361e29 52%, #211c24 60%, #1c1d1f 75%);
  color: #fff;
  font-size: 12px;
}
.left { display: flex; align-items: center; }
.left button { display: grid; place-items: center; width: 48px; height: 40px; }
.links { margin-left: 4px; font-size: 11px; }
.pinned { display: flex; gap: 5px; padding-right: 11px; }
.pin { position: relative; display: grid; place-items: center; width: 40px; height: 40px; border-bottom: 2px solid #a8dcff; }
.pin:last-child { margin-left: 4px; }
.pin.on { width: 48px; background: rgba(255, 255, 255, .2); }
.badge { position: absolute; right: 7px; bottom: 4px; font-size: 10px; line-height: 12px; }
.badge.sq { right: 4px; padding: 0 1px; border-radius: 2px; background: #f03c3c; font-size: 9px; font-weight: 400; line-height: 11px; }
.tray { display: flex; align-items: center; justify-content: flex-end; gap: 9px; padding-right: 20px; border-right: 1px solid #777; margin-right: 4px; }
.cloud { margin-right: 18px; }
.lang { font-size: 12px; }
time { width: 62px; text-align: center; font-size: 11px; line-height: 18px; white-space: nowrap; }
.note { margin-left: 4px; }
```
